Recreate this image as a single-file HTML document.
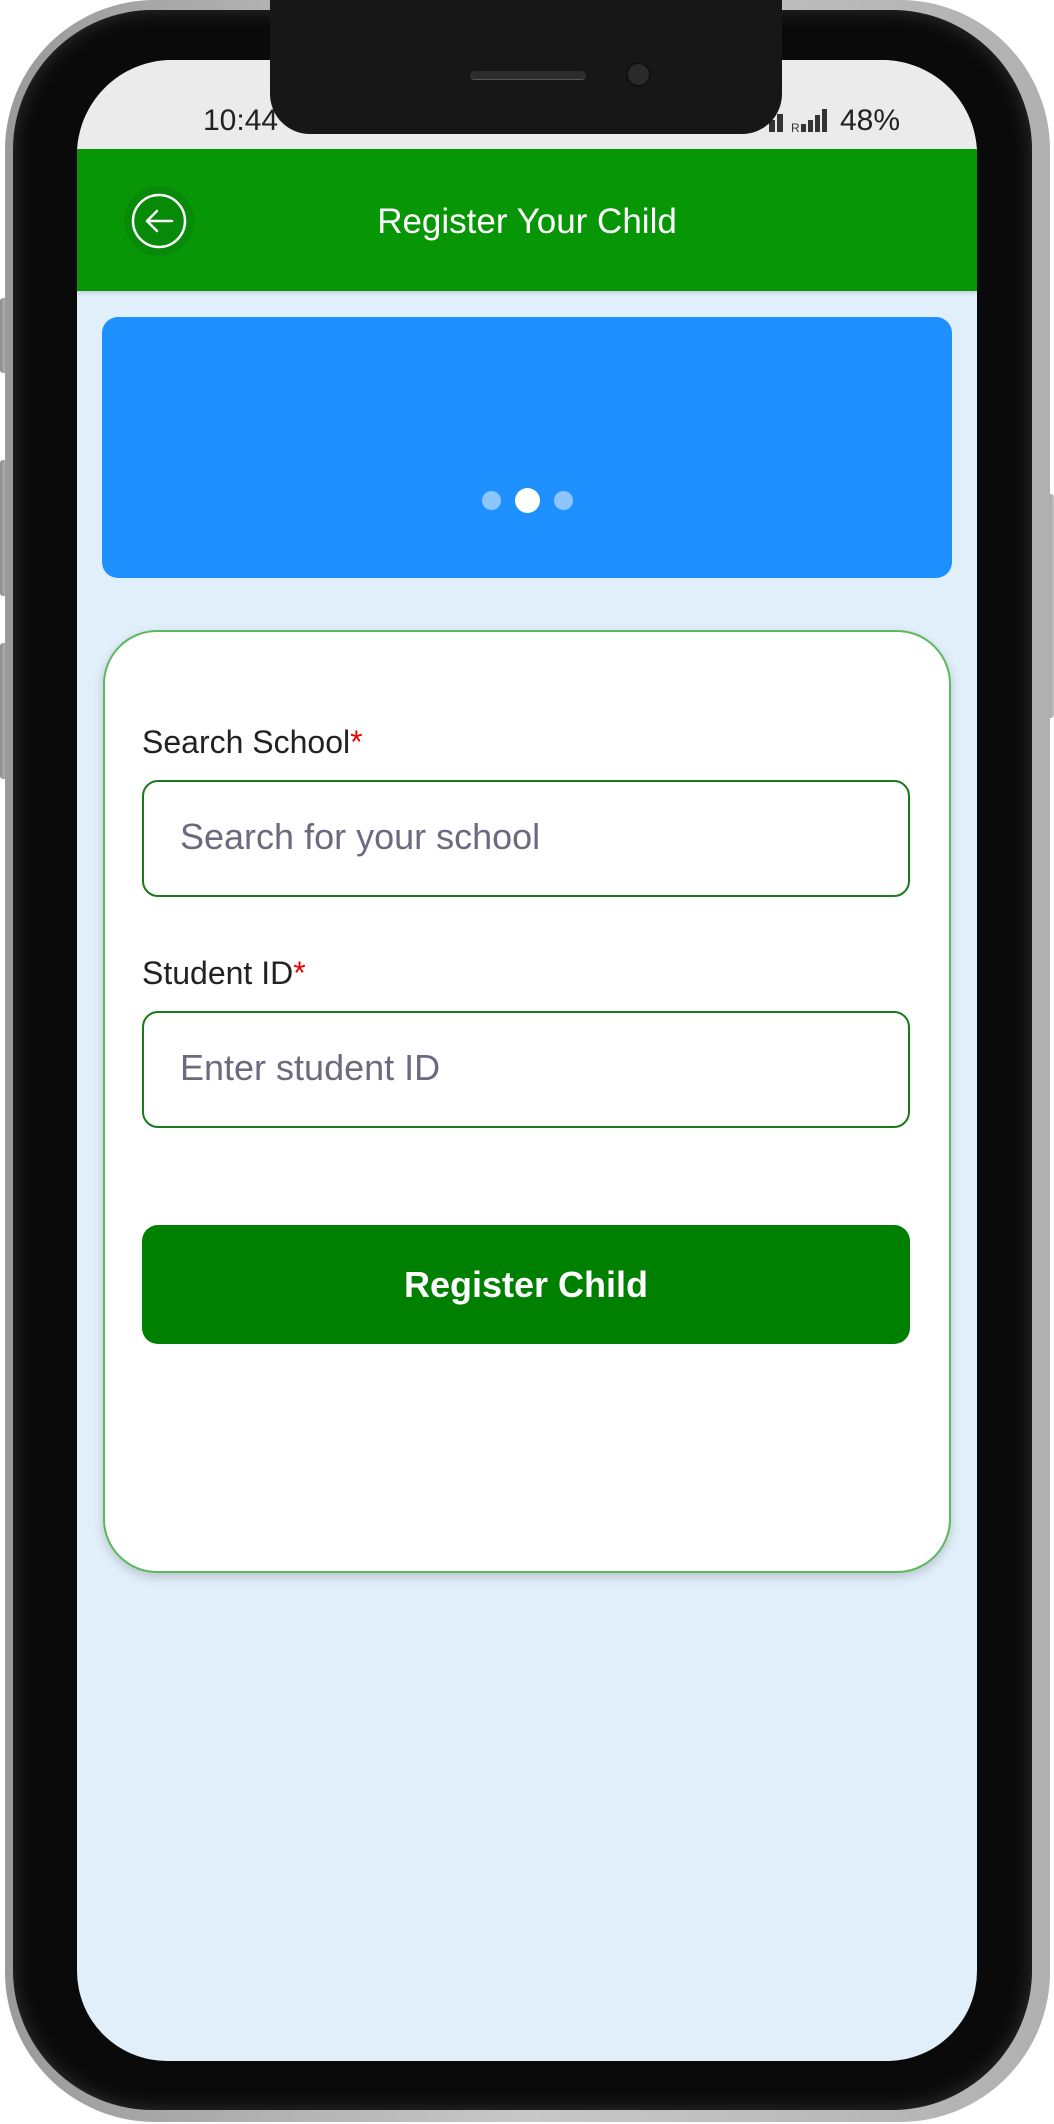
<!DOCTYPE html>
<html><head><meta charset="utf-8"><style>
*{margin:0;padding:0;box-sizing:border-box}
html,body{width:1054px;height:2124px;background:#fff;overflow:hidden;font-family:"Liberation Sans",sans-serif}
.side{position:absolute;background:linear-gradient(90deg,#8a8a8a,#c4c4c4);border-radius:3px}
.phone{position:absolute;left:5px;top:0;width:1045px;height:2122px;border-radius:150px;background:linear-gradient(90deg,#9a9a9a,#c8c8c8 50%,#b0b0b0);}
.bezel{position:absolute;left:13px;top:10px;width:1019px;height:2100px;border-radius:140px;background:#0a0a0a;box-shadow:inset 0 0 20px #333}
.screen{position:absolute;left:77px;top:60px;width:900px;height:2001px;border-radius:95px 95px 90px 90px;background:#e1effb;overflow:hidden}
.status{position:absolute;left:0;top:0;width:900px;height:89px;background:#ebebeb}
.header{position:absolute;left:0;top:89px;width:900px;height:142px;background:#069606;box-shadow:0 2px 4px rgba(0,0,0,.15)}
.notch{position:absolute;left:270px;top:0;width:512px;height:134px;background:#171717;border-radius:0 0 40px 40px}
.speaker{position:absolute;left:470px;top:71px;width:116px;height:9px;border-radius:5px;background:#2c2c2c;border-bottom:1px solid #555}
.cam{position:absolute;left:626px;top:62px;width:25px;height:25px;border-radius:50%;background:#2a2a2a;border:2px solid #111}
</style></head><body>
<div class="side" style="left:0;top:298px;width:8px;height:75px"></div>
<div class="side" style="left:0;top:460px;width:8px;height:136px"></div>
<div class="side" style="left:0;top:643px;width:8px;height:136px"></div>
<div class="side" style="left:1046px;top:494px;width:8px;height:224px"></div>
<div class="phone"></div>
<div class="bezel"></div>
<div class="screen">
  <div class="status">
    <div style="position:absolute;left:126px;top:44px;font-size:30px;color:#222">10:44</div>
    <div style="position:absolute;right:77px;top:44px;font-size:30px;color:#222">48%</div>
    <svg style="position:absolute;left:690px;top:46px" width="70" height="28">
      <rect x="2" y="14" width="6" height="12" fill="#333"/><rect x="10" y="8" width="6" height="18" fill="#333"/>
      <text x="24" y="26" font-size="12" fill="#333" font-family="Liberation Sans">R</text>
      <rect x="34" y="18" width="5" height="8" fill="#333"/><rect x="41" y="14" width="5" height="12" fill="#333"/><rect x="48" y="9" width="5" height="17" fill="#333"/><rect x="55" y="3" width="5" height="23" fill="#333"/>
    </svg>
  </div>
  <div class="header">
    <div style="position:absolute;left:47px;top:37px;width:70px;height:70px;border-radius:50%;background:#078a07"></div>
    <svg style="position:absolute;left:53px;top:43px" width="58" height="58" viewBox="0 0 58 58"><circle cx="29" cy="29" r="26" fill="none" stroke="#fff" stroke-width="2.5"/><path d="M42 29H17M27 19L17 29L27 39" fill="none" stroke="#fff" stroke-width="2.5" stroke-linecap="round" stroke-linejoin="round"/></svg>
    <div style="position:absolute;left:0;width:900px;top:53px;text-align:center;font-size:35px;color:#fff">Register Your Child</div>
  </div>
  <div style="position:absolute;left:25px;top:257px;width:850px;height:261px;border-radius:16px;background:#1e90ff">
    <div style="position:absolute;left:380px;top:174px;width:19px;height:19px;border-radius:50%;background:#8ec5ff"></div>
    <div style="position:absolute;left:413px;top:171px;width:25px;height:25px;border-radius:50%;background:#fff"></div>
    <div style="position:absolute;left:452px;top:174px;width:19px;height:19px;border-radius:50%;background:#8ec5ff"></div>
  </div>
  <div style="position:absolute;left:26px;top:570px;width:848px;height:943px;border-radius:54px;background:#fff;border:2px solid #5cb85c;box-shadow:0 4px 10px rgba(0,0,0,.18)">
    <div style="position:absolute;left:37px;top:92px;font-size:32px;color:#222">Search School<span style="color:#e00">*</span></div>
    <div style="position:absolute;left:37px;top:148px;width:768px;height:117px;border:2.5px solid #1a7a1a;border-radius:16px"><div style="position:absolute;left:36px;top:34px;font-size:36px;color:#6b6b80">Search for your school</div></div>
    <div style="position:absolute;left:37px;top:323px;font-size:32px;color:#222">Student ID<span style="color:#e00">*</span></div>
    <div style="position:absolute;left:37px;top:379px;width:768px;height:117px;border:2.5px solid #1a7a1a;border-radius:16px"><div style="position:absolute;left:36px;top:34px;font-size:36px;color:#6b6b80">Enter student ID</div></div>
    <div style="position:absolute;left:37px;top:593px;width:768px;height:119px;border-radius:16px;background:#008000;color:#fff;font-weight:bold;font-size:36px;text-align:center;line-height:119px">Register Child</div>
  </div>
</div>
<div class="notch"></div>
<div class="speaker"></div>
<div class="cam"></div>
</body></html>
